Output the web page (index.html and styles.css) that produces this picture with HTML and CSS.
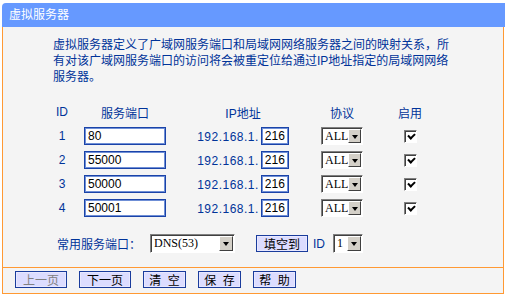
FILE: index.html
```html
<!DOCTYPE html>
<html lang="zh-CN">
  <head>
    <meta charset="UTF-8" />
    <title>虚拟服务器</title>
    <link rel="stylesheet" href="styles.css">
  </head>
  <body>
    <div class="page">
      <div class="titlebar">虚拟服务器</div>
      <div class="panel">
        <div class="main">
          <p class="intro">
            虚拟服务器定义了广域网服务端口和局域网网络服务器之间的映射关系，所<br />
            有对该广域网服务端口的访问将会被重定位给通过IP地址指定的局域网网络<br />
            服务器。
          </p>

          <div class="grid">
            <div class="head">ID</div>
            <div class="head">服务端口</div>
            <div class="head">IP地址</div>
            <div class="head">协议</div>
            <div class="head">启用</div>

            <div class="num">1</div>
            <div><input class="txt port" value="80" /></div>
            <div class="ip">192.168.1.<input class="txt last" value="216" /></div>
            <div><span class="sel sel-proto"><span class="val">ALL</span><span class="arrow"></span></span></div>
            <div><span class="chk"></span></div>

            <div class="num">2</div>
            <div><input class="txt port" value="55000" /></div>
            <div class="ip">192.168.1.<input class="txt last" value="216" /></div>
            <div><span class="sel sel-proto"><span class="val">ALL</span><span class="arrow"></span></span></div>
            <div><span class="chk"></span></div>

            <div class="num">3</div>
            <div><input class="txt port" value="50000" /></div>
            <div class="ip">192.168.1.<input class="txt last" value="216" /></div>
            <div><span class="sel sel-proto"><span class="val">ALL</span><span class="arrow"></span></span></div>
            <div><span class="chk"></span></div>

            <div class="num">4</div>
            <div><input class="txt port" value="50001" /></div>
            <div class="ip">192.168.1.<input class="txt last" value="216" /></div>
            <div><span class="sel sel-proto"><span class="val">ALL</span><span class="arrow"></span></span></div>
            <div><span class="chk"></span></div>
          </div>

          <div class="quick">
            <span class="label">常用服务端口：</span>
            <span class="sel sel-dns"><span class="val">DNS(53)</span><span class="arrow"></span></span>
            <button class="btn btn-fill">填空到</button>
            <span class="label label-id">ID</span>
            <span class="sel sel-id"><span class="val">1</span><span class="arrow"></span></span>
          </div>
        </div>

        <div class="actions">
          <button class="btn btn-wide" disabled>上一页</button>
          <button class="btn btn-wide">下一页</button>
          <button class="btn">清 空</button>
          <button class="btn">保 存</button>
          <button class="btn">帮 助</button>
        </div>
      </div>
    </div>
  </body>
</html>
```

FILE: styles.css
```css
body {
  margin: 0;
  background: #fff;
  font-family: "Liberation Sans", "Noto Sans CJK SC", sans-serif;
  font-size: 12px;
  color: #003399;
}

.page {
  margin: 3px 0 0 2px;
}

.titlebar {
  height: 24px;
  line-height: 24px;
  padding-left: 7px;
  background: #6699ff;
  color: #fff;
  border-top-left-radius: 4px;
}

.panel {
  width: 500px;
  background: #f4f4f4;
  border-left: 1px solid #ff9933;
  border-right: 1px solid #ff9933;
  border-bottom: 1px solid #ff9933;
}

.main {
  padding: 10px 0 14px 0;
}

.intro {
  margin: 0 0 0 50px;
  line-height: 16px;
}

/* table of mappings */
.grid {
  display: grid;
  grid-template-columns: 44px 82px 154px 44px 92px;
  grid-auto-rows: 24px;
  align-items: center;
  justify-items: center;
  margin: 15px 0 0 37px;
}

.ip {
  display: flex;
  align-items: center;
  padding-top: 2px;
  letter-spacing: 0.5px;
}

.txt {
  box-sizing: border-box;
  height: 18px;
  padding: 0 0 0 3px;
  border: 1px solid #1a43a8;
  box-shadow: inset 0 0 0 1px #6f8fd6;
  background: #fff;
  font-family: "Liberation Sans", sans-serif;
  font-size: 12px;
  letter-spacing: 0;
  color: #000;
  outline: none;
}

.port {
  width: 82px;
}

.last {
  width: 28px;
  margin: -2px 0 0 2px;
}

/* fake windows-style select */
.sel {
  box-sizing: border-box;
  display: inline-flex;
  align-items: stretch;
  height: 18px;
  background: #fff;
  border: 1px solid;
  border-color: #808080 #fff #fff #808080;
  box-shadow: inset 1px 1px 0 #404040;
  color: #000;
}

.sel .val {
  flex: 1;
  padding: 1px 0 0 3px;
  line-height: 14px;
  font-family: "Liberation Serif", serif;
  font-size: 12px;
}

.sel .arrow {
  position: relative;
  width: 14px;
  margin: 1px 1px 1px 0;
  background: #d4d0c8;
  border: 1px solid;
  border-color: #fff #404040 #404040 #fff;
  box-sizing: border-box;
}

.sel .arrow::after {
  content: "";
  position: absolute;
  left: 3px;
  top: 5px;
  border-left: 3px solid transparent;
  border-right: 3px solid transparent;
  border-top: 4px solid #000;
}

.sel-proto {
  width: 42px;
}

.sel-dns {
  width: 85px;
  height: 19px;
  margin-left: 9px;
}

.sel-id {
  width: 30px;
  height: 19px;
  margin-left: 8px;
}

.chk {
  box-sizing: border-box;
  position: relative;
  display: block;
  width: 13px;
  height: 13px;
  background: #fff;
  border: 1px solid;
  border-color: #808080 #fff #fff #808080;
  box-shadow: inset 1px 1px 0 #404040;
}

.chk::after {
  content: "";
  position: absolute;
  left: 3px;
  top: 2px;
  width: 5px;
  height: 3px;
  border-left: 2px solid #000;
  border-bottom: 2px solid #000;
  transform: rotate(-45deg);
}

/* common service row */
.quick {
  display: flex;
  align-items: center;
  height: 19px;
  margin: 14px 0 0 54px;
}

.label-id {
  margin-left: 5px;
}

.btn {
  box-sizing: border-box;
  width: 43px;
  height: 17px;
  padding: 0;
  background: #dcdcff;
  border: 1px solid #1a3c9c;
  box-shadow: inset 0 0 0 1px #e8e8ff;
  font-family: "Noto Sans CJK SC", sans-serif;
  font-size: 12px;
  line-height: 15px;
  word-spacing: 4px;
  color: #000;
  cursor: pointer;
}

.btn:disabled {
  color: #808080;
}

.btn-wide {
  width: 52px;
}

.btn-fill {
  width: 52px;
  margin-left: 21px;
}

.actions {
  display: flex;
  gap: 12px;
  padding: 3px 0 5px 12px;
  border-top: 1px solid #ff9933;
}
```
